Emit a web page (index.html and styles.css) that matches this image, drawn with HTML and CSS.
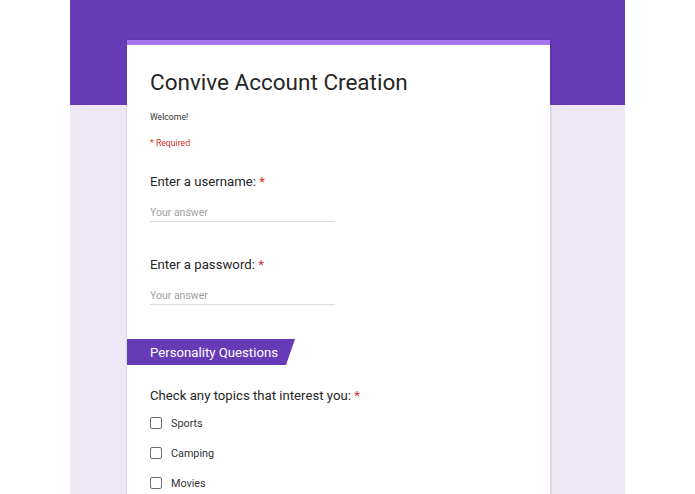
FILE: index.html
```html
<!DOCTYPE html>
<html>
<head>
<meta charset="utf-8">
<link rel="stylesheet" href="styles.css">
</head>
<body>
<div class="page">
  <div class="card">
    <div class="head">
      <h1 class="title">Convive Account Creation</h1>
      <p class="desc">Welcome!</p>
      <p class="req">* Required</p>
    </div>
    <div class="question q1">
      <div class="label">Enter a username: <span class="star">*</span></div>
      <div class="answer">Your answer</div>
    </div>
    <div class="question q2">
      <div class="label">Enter a password: <span class="star">*</span></div>
      <div class="answer">Your answer</div>
    </div>
    <div class="section"><span>Personality Questions</span></div>
    <div class="question q3">
      <div class="label">Check any topics that interest you: <span class="star">*</span></div>
      <div class="opts">
        <div class="opt"><span class="box"></span><span class="opt-text">Sports</span></div>
        <div class="opt"><span class="box"></span><span class="opt-text">Camping</span></div>
        <div class="opt"><span class="box"></span><span class="opt-text">Movies</span></div>
      </div>
    </div>
  </div>
</div>
</body>
</html>
```

FILE: styles.css
```css
html, body {
  margin: 0;
  padding: 0;
  background: #ffffff;
  height: 494px;
  overflow: hidden;
}
body {
  font-family: Roboto, "Liberation Sans", Arial, sans-serif;
  color: #262626;
}
.page {
  width: 555px;
  margin: 0 auto;
  height: 494px;
  padding-top: 40px;
  box-sizing: border-box;
  background: linear-gradient(to bottom, #673ab7 0, #673ab7 105px, #ede7f6 105px, #ede7f6 100%);
}
.card {
  margin-left: 57px;
  width: 423px;
  height: 460px;
  background: #ffffff;
  border-top: 5px solid #a774f4;
  box-shadow: 1px 0 2px rgba(0,0,0,0.12), -1px 0 1px rgba(0,0,0,0.05);
}
.head {
  padding: 21px 23px 0;
}
.title {
  margin: 0;
  font-size: 22.5px;
  line-height: 32px;
  font-weight: 400;
  color: #262626;
}
.desc {
  margin: 12px 0 0;
  font-size: 8.7px;
  line-height: 14px;
  color: #333333;
}
.req {
  margin: 12px 0 0;
  font-size: 8.7px;
  line-height: 14px;
  color: #d93025;
}
.question {
  padding: 0 23px;
}
.q1 { margin-top: 22px; }
.q2 { margin-top: 33px; }
.q3 { margin-top: 21px; }
.label {
  font-size: 13.2px;
  line-height: 20px;
  color: #262626;
}
.star {
  color: #d93025;
}
.answer {
  margin-top: 13px;
  width: 185px;
  font-size: 10.5px;
  line-height: 16px;
  color: #a0a0a0;
  border-bottom: 1px solid #dadce0;
}
.section {
  margin-top: 34px;
  width: 168px;
  height: 26px;
  background: #673ab7;
  clip-path: polygon(0 0, 100% 0, calc(100% - 9px) 100%, 0 100%);
  display: flex;
  align-items: center;
  padding-left: 23px;
  box-sizing: border-box;
}
.section span {
  color: #ffffff;
  font-size: 13.2px;
}
.opts {
  margin-top: 2px;
}
.opt {
  height: 30px;
  display: flex;
  align-items: center;
  gap: 9px;
}
.box {
  width: 12px;
  height: 12px;
  border: 1.5px solid #6f6f6f;
  border-radius: 2px;
  box-sizing: border-box;
}
.opt-text {
  font-size: 10.8px;
  color: #333333;
}
```
